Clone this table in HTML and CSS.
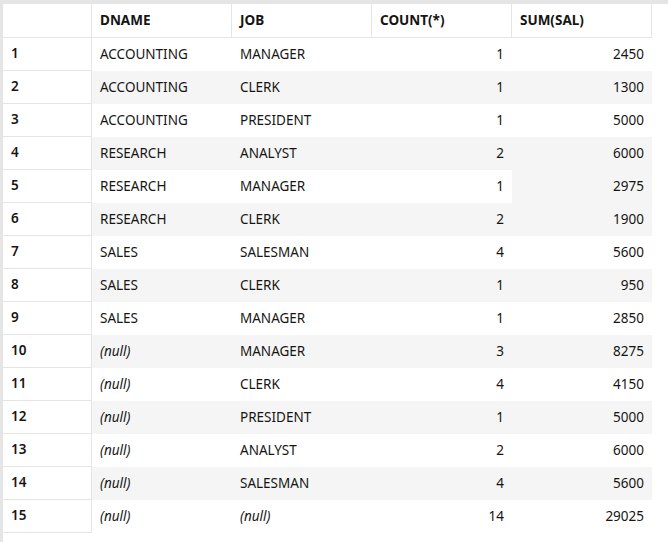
FILE: index.html
```html
<!DOCTYPE html>
<html>
<head>
<meta charset="utf-8">
<link rel="stylesheet" href="styles.css">
</head>
<body>
<div class="frame">
  <div class="grid">
    <div class="hd rn"></div>
    <div class="hd">DNAME</div>
    <div class="hd">JOB</div>
    <div class="hd">COUNT(*)</div>
    <div class="hd">SUM(SAL)</div>

    <div class="rn">1</div><div class="c">ACCOUNTING</div><div class="c">MANAGER</div><div class="c num">1</div><div class="c num">2450</div>
    <div class="rn">2</div><div class="c alt">ACCOUNTING</div><div class="c alt">CLERK</div><div class="c alt num">1</div><div class="c alt num">1300</div>
    <div class="rn">3</div><div class="c">ACCOUNTING</div><div class="c">PRESIDENT</div><div class="c num">1</div><div class="c num">5000</div>
    <div class="rn">4</div><div class="c alt">RESEARCH</div><div class="c alt">ANALYST</div><div class="c alt num">2</div><div class="c alt num">6000</div>
    <div class="rn">5</div><div class="c">RESEARCH</div><div class="c">MANAGER</div><div class="c num">1</div><div class="c num focus">2975</div>
    <div class="rn">6</div><div class="c alt">RESEARCH</div><div class="c alt">CLERK</div><div class="c alt num">2</div><div class="c alt num">1900</div>
    <div class="rn">7</div><div class="c">SALES</div><div class="c">SALESMAN</div><div class="c num">4</div><div class="c num">5600</div>
    <div class="rn">8</div><div class="c alt">SALES</div><div class="c alt">CLERK</div><div class="c alt num">1</div><div class="c alt num">950</div>
    <div class="rn">9</div><div class="c">SALES</div><div class="c">MANAGER</div><div class="c num">1</div><div class="c num">2850</div>
    <div class="rn">10</div><div class="c alt null">(null)</div><div class="c alt">MANAGER</div><div class="c alt num">3</div><div class="c alt num">8275</div>
    <div class="rn">11</div><div class="c null">(null)</div><div class="c">CLERK</div><div class="c num">4</div><div class="c num">4150</div>
    <div class="rn">12</div><div class="c alt null">(null)</div><div class="c alt">PRESIDENT</div><div class="c alt num">1</div><div class="c alt num">5000</div>
    <div class="rn">13</div><div class="c null">(null)</div><div class="c">ANALYST</div><div class="c num">2</div><div class="c num">6000</div>
    <div class="rn">14</div><div class="c alt null">(null)</div><div class="c alt">SALESMAN</div><div class="c alt num">4</div><div class="c alt num">5600</div>
    <div class="rn">15</div><div class="c null">(null)</div><div class="c null">(null)</div><div class="c num">14</div><div class="c num">29025</div>
  </div>
</div>
</body>
</html>
```

FILE: styles.css
```css
html, body {
  margin: 0;
  padding: 0;
  background: #ffffff;
}
body {
  font-family: "Noto Sans", "Liberation Sans", sans-serif;
  font-size: 13.5px;
  color: #161513;
}
.frame {
  box-sizing: border-box;
  height: 542px;
  border-top: 4px solid #e5e5e5;
  border-left: 3px solid #e5e5e5;
  overflow: hidden;
}
.grid {
  display: grid;
  grid-template-columns: 89px repeat(4, 140px);
  grid-template-rows: 34px;
  grid-auto-rows: 33px;
  width: 649px;
}
.grid > div {
  box-sizing: border-box;
  display: flex;
  align-items: center;
  padding: 0 8px 2px 8px;
  white-space: nowrap;
}
.hd {
  font-weight: 700;
  border-right: 1px solid #e5e5e5;
  border-bottom: 1px solid #e5e5e5;
}
.rn {
  font-weight: 600;
  border-right: 1px solid #e5e5e5;
  border-bottom: 1px solid #e5e5e5;
}
.c {
  background: #ffffff;
}
.alt, .focus {
  background: #f5f5f5;
}
.num {
  justify-content: flex-end;
}
.null {
  font-style: italic;
}
```
